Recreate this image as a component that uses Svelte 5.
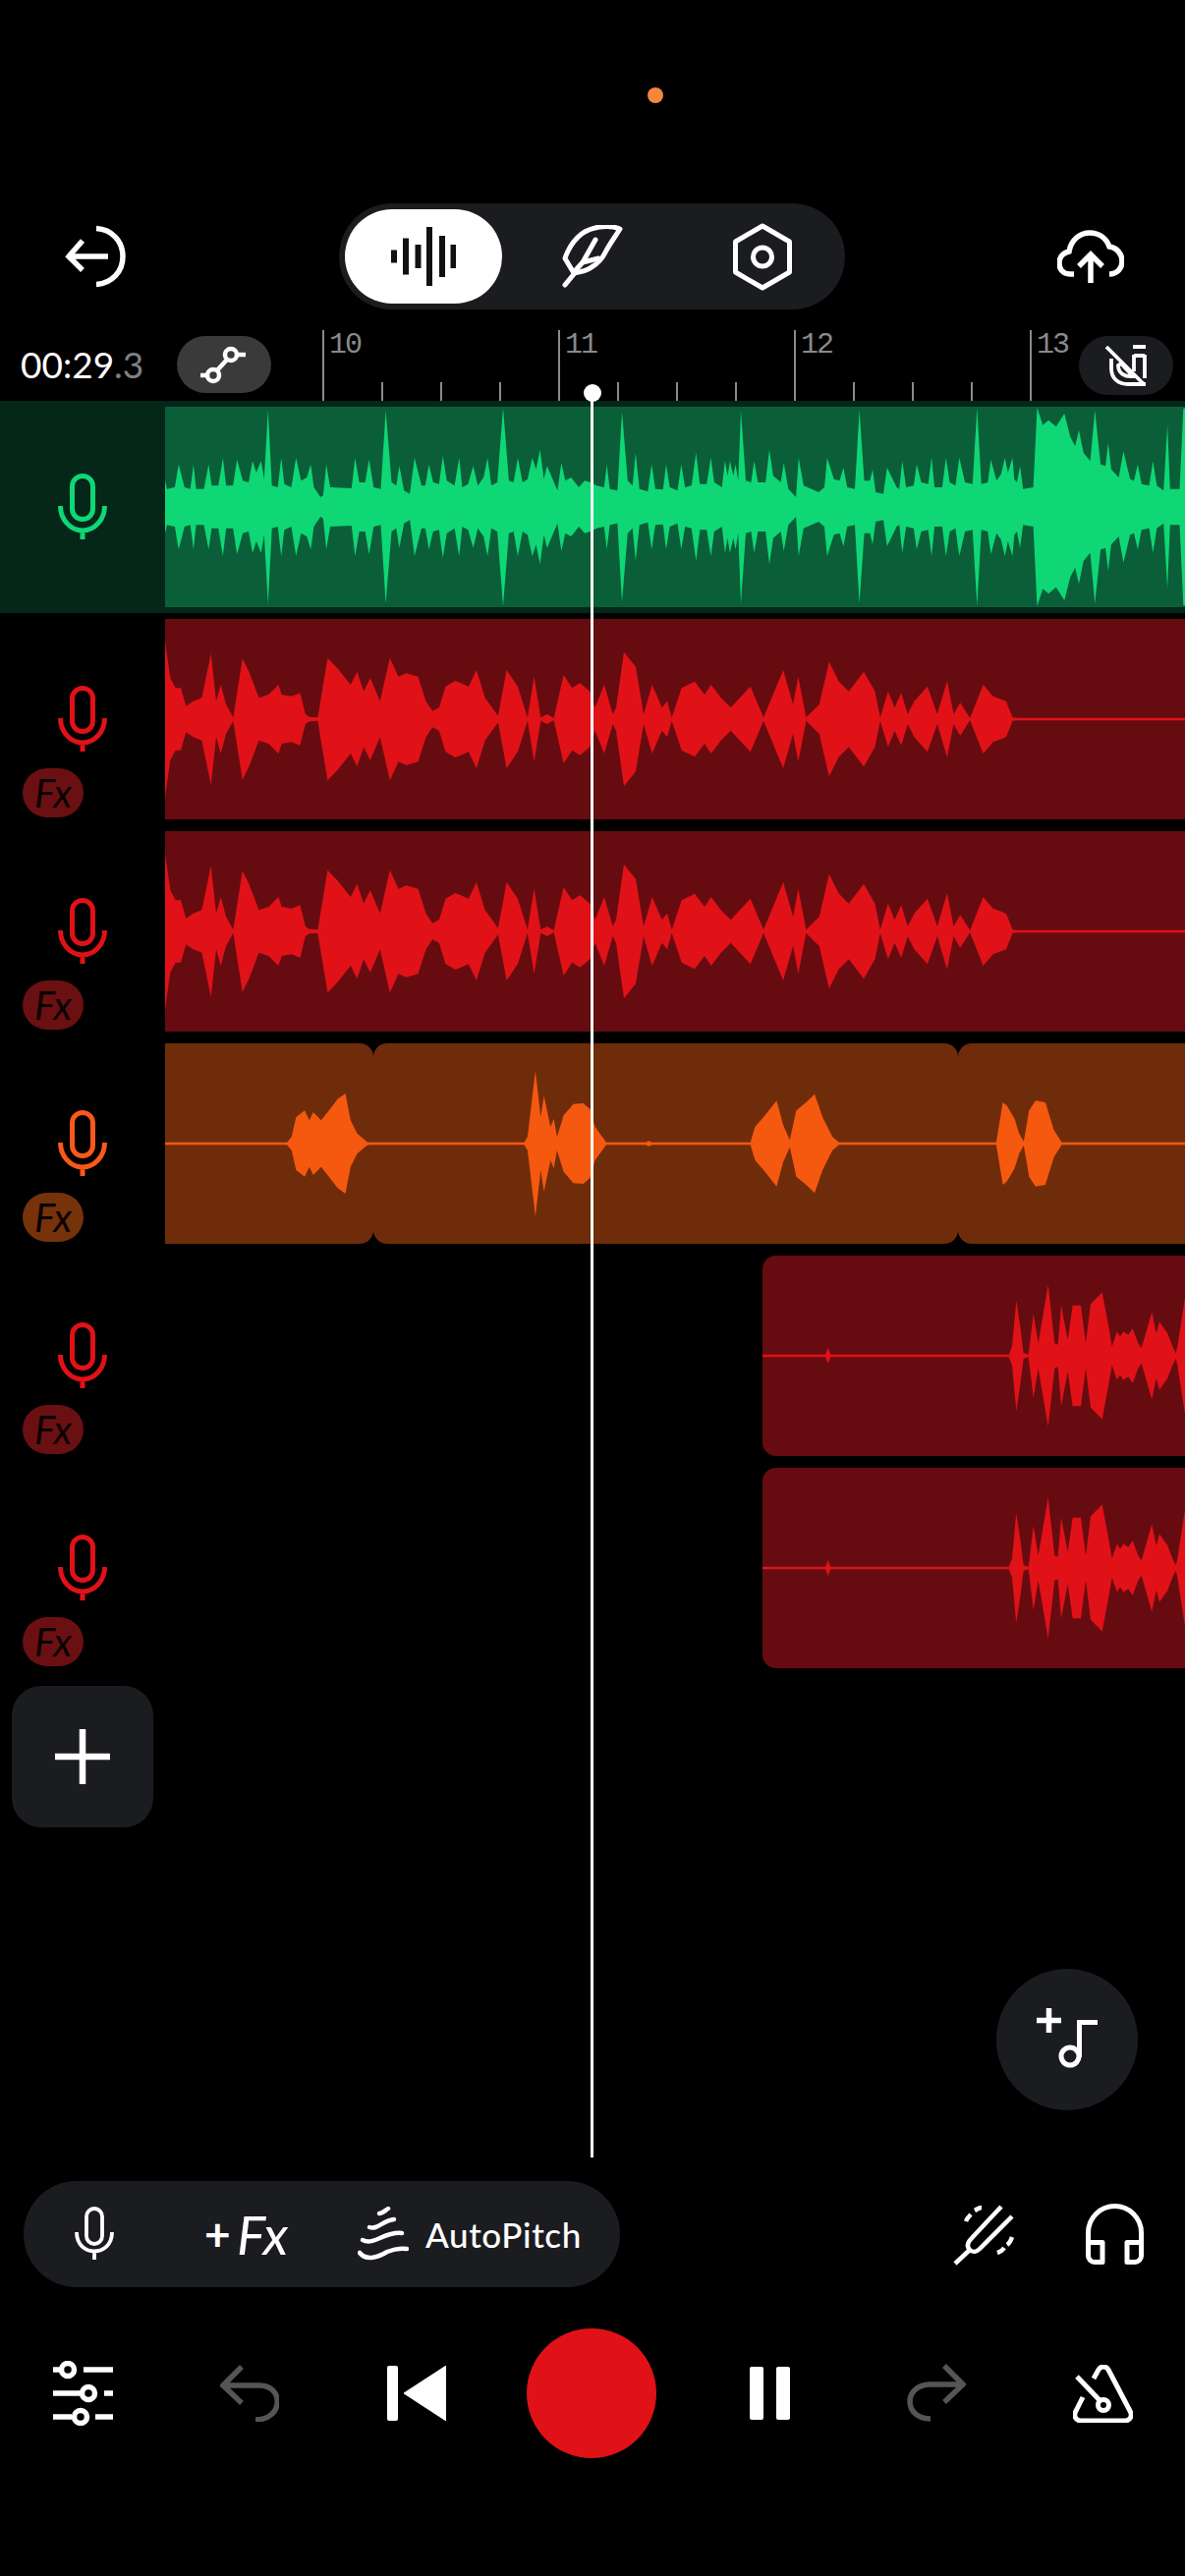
<script>
  const conv = (pts, sx, ox, cy) => pts.map(([x, y]) => [(x - ox) / sx, Math.max((cy - y) / 3, 1)]);
  const shape = (pts) => {
    const top = pts.map(([x, a]) => `${x.toFixed(1)} ${(102 - a).toFixed(1)}`);
    const bottom = [...pts].reverse().map(([x, a]) => `${x.toFixed(1)} ${(102 + a).toFixed(1)}`);
    return 'M' + top.join('L') + 'L' + bottom.join('L') + 'Z';
  };

  const greenA = [[425,265],[430,290],[450,285],[460,215],[475,285],[490,290],[498,215],[505,290],[525,290],[537,215],[545,280],[562,280],[574,195],[582,280],[600,280],[610,200],[625,265],[640,270],[650,205],[660,240],[672,205],[680,260],[690,48],[700,280],[715,285],[724,195],[732,275],[750,285],[762,195],[775,265],[790,255],[800,215],[808,285],[825,315],[832,310],[840,215],[850,285],[905,288],[914,195],[925,270],[940,270],[950,200],[962,285],[980,290],[993,50],[1008,270],[1020,280],[1028,220],[1040,295],[1055,305],[1067,195],[1085,280],[1095,280],[1104,215],[1115,270],[1130,275],[1140,190],[1150,265],[1170,280],[1182,195],[1190,285],[1205,275],[1218,220],[1230,280],[1245,255],[1255,195],[1265,280],[1280,270],[1295,42],[1310,265],[1322,270],[1333,195],[1345,270],[1358,260],[1370,195],[1380,230],[1390,170],[1400,260],[1408,220],[1435,295],[1445,210],[1455,265],[1470,255],[1490,285],[1505,265],[1520,270]];
  const greenB = [[15,280],[35,285],[42,215],[50,290],[70,295],[82,55],[97,265],[110,280],[118,180],[128,290],[150,298],[160,215],[170,290],[190,292],[198,215],[208,285],[228,295],[238,215],[248,285],[265,280],[277,180],[287,275],[305,275],[316,195],[325,270],[345,285],[353,205],[360,250],[366,205],[375,250],[381,215],[388,265],[395,50],[408,265],[422,270],[430,205],[440,270],[460,270],[470,170],[480,250],[500,270],[508,210],[520,290],[540,315],[547,195],[560,280],[600,300],[615,285],[622,195],[640,260],[655,265],[665,225],[675,285],[695,290],[707,50],[720,265],[735,265],[742,230],[750,300],[770,305],[780,225],[805,285],[812,290],[820,205],[830,285],[850,280],[858,215],[870,270],[888,275],[897,195],[905,285],[925,285],[935,195],[945,270],[960,280],[970,195],[985,270],[1005,275],[1017,42],[1028,275],[1045,270],[1053,200],[1068,265],[1080,245],[1090,195],[1098,240],[1110,195],[1115,260],[1122,270],[1130,220],[1138,290],[1165,285],[1175,42],[1190,95],[1205,80],[1225,100],[1247,60],[1262,130],[1275,160],[1285,110],[1297,180],[1315,205],[1327,50],[1342,215],[1355,220],[1362,150],[1370,230],[1390,255],[1402,175],[1420,260],[1430,265],[1440,215],[1450,275],[1470,280],[1480,205],[1490,280],[1508,295],[1518,95],[1525,290],[1550,290],[1560,45],[1568,42]];
  const greenPath = shape([
    ...conv(greenA, 2.529, 425, 345),
    ...conv(greenB, 2.587, -1121, 345)
  ]);

  const redFull = [[12,95],[20,210],[28,240],[36,240],[44,295],[55,280],[68,270],[82,135],[90,280],[97,230],[105,290],[116,330],[130,150],[140,190],[155,270],[170,260],[185,230],[190,260],[205,265],[218,255],[226,320],[232,328],[245,330],[260,148],[275,180],[295,230],[305,190],[315,250],[325,210],[340,280],[355,148],[368,205],[380,195],[398,205],[410,280],[420,310],[430,300],[440,235],[455,218],[475,235],[487,185],[500,270],[520,325],[533,185],[550,235],[565,330],[575,205],[585,330],[595,320],[605,335],[620,200],[633,240],[645,225],[660,250],[668,300],[682,230],[695,320],[700,300],[712,130],[730,175],[742,320],[755,230],[770,300],[778,280],[785,330],[800,240],[820,220],[835,260],[845,230],[860,270],[875,300],[905,235],[925,330],[955,185],[970,290],[978,205],[990,330],[1010,290],[1025,160],[1040,220],[1055,250],[1078,190],[1095,250],[1103,330],[1115,250],[1125,300],[1135,255],[1145,320],[1155,280],[1175,235],[1190,320],[1205,218],[1215,320],[1225,285],[1240,335],[1260,230],[1275,265],[1295,280],[1305,330],[1310,331],[1568,331]];
  const redPath = shape(conv(redFull, 1.499, 12, 335));

  const orange = [[12,337],[198,337],[205,320],[212,260],[225,240],[232,270],[238,245],[250,270],[262,240],[275,205],[287,188],[295,270],[305,310],[320,336],[325,337],[560,337],[565,320],[577,118],[585,260],[590,195],[600,290],[605,265],[610,320],[620,255],[635,220],[650,218],[660,235],[668,290],[685,337],[745,337],[750,333],[755,337],[905,337],[912,290],[925,260],[945,210],[955,285],[965,330],[975,240],[990,215],[1003,190],[1015,260],[1030,320],[1040,337],[1280,337],[1290,215],[1296,225],[1308,265],[1315,310],[1322,335],[1330,240],[1340,210],[1355,215],[1368,300],[1380,337],[1568,337]];
  const orangePath = shape(conv(orange, 1.499, 12, 341));

  const late = [[228,325],[420,325],[428,305],[436,325],[980,325],[990,300],[1003,160],[1015,240],[1025,320],[1040,325],[1055,200],[1070,290],[1100,112],[1120,290],[1130,295],[1140,175],[1160,280],[1175,175],[1200,175],[1215,290],[1230,170],[1265,135],[1285,240],[1295,300],[1310,255],[1320,270],[1330,255],[1345,265],[1358,245],[1375,290],[1385,305],[1417,195],[1430,260],[1440,225],[1465,260],[1480,300],[1490,320],[1495,300],[1518,150]];
  const latePath = shape(conv(late, 3, 228, 328.5));

  const tracks = [
    { kind: 'green', fx: false, clips: [{ cls: 'full' }], path: greenPath, w: 1038 },
    { kind: 'red', fx: true, clips: [{ cls: 'full' }], path: redPath, w: 1038 },
    { kind: 'red', fx: true, clips: [{ cls: 'full' }], path: redPath, w: 1038 },
    { kind: 'orange', fx: true, clips: [{ cls: 'first' }, { cls: 'mid' }, { cls: 'last' }], path: orangePath, w: 1038 },
    { kind: 'red', fx: true, clips: [{ cls: 'late' }], path: latePath, w: 430 },
    { kind: 'red', fx: true, clips: [{ cls: 'late' }], path: latePath, w: 430 }
  ];

  const ruler = [10, null, null, null, 11, null, null, null, 12, null, null, null, 13];
  const bars = [[0, 13], [12, 37], [24.5, 24], [36, 60], [49, 42], [60.5, 24]];
</script>

<div class="screen">
  <div class="status"><span class="dot"></span></div>

  <div class="toolbar">
    <svg class="ic" width="64" height="64" viewBox="0 0 64 64" fill="none" stroke="#fff" stroke-width="5.5">
      <path d="M18 16 4 32l14 14M4 32h40" stroke-linejoin="miter" />
      <path d="M32 3.5c16 1 27 13 27 28.500s-11 27.500-27 28.500" />
    </svg>
    <div class="modes">
      <div class="seg active">
        <svg width="66" height="60" viewBox="0 0 66 60" fill="#111">
          {#each bars as [x, h]}<rect x={x} y={30 - h / 2} width="6" height={h} />{/each}
        </svg>
      </div>
      <div class="seg">
        <svg width="62" height="65" viewBox="0 0 62 65" fill="none" stroke="#fff" stroke-width="5" stroke-linecap="round" stroke-linejoin="round">
          <path d="M59 4C46-1 30 2 20 9 11 16 6 25 3 34l9 15c7-1 14-3 18-6 7-4 11-9 14-15 4-8 10-16 15-24Z" />
          <path d="M3 61 12 50M34 15 21 38M21 38 37 34M13 47l8-9" />
        </svg>
      </div>
      <div class="seg">
        <svg width="60" height="69" viewBox="0 0 60 69" fill="none" stroke="#fff" stroke-width="5">
          <path d="M30 3 57.500 19v31L30 66 2.500 50V19Z" stroke-linejoin="round" />
          <circle cx="30" cy="34.500" r="9.500" />
        </svg>
      </div>
    </div>
    <svg class="ic" width="68" height="54" viewBox="0 0 68 54" fill="none" stroke="#fff" stroke-width="5.500">
      <path d="M17 45h-4C5 45 2 39 2 34c0-7 5-11 10-12C14 10 23 3 33 3c10 0 17 6 20 14 8 1 13 8 13 15 0 7-5 13-13 13" />
      <path d="M34 54V25M22 37l12-12 12 12" />
    </svg>
  </div>

  <div class="timeline">
    <div class="meta">
      <div class="time">00:29<span>.3</span></div>
      <div class="chip">
        <svg width="50" height="42" viewBox="0 0 50 42" fill="none" stroke="#fff" stroke-width="4.500">
          <circle cx="32" cy="11" r="6" />
          <circle cx="14" cy="32" r="6" />
          <path d="M28 16 18 27M38 11h9M1 32h8" />
        </svg>
      </div>
    </div>
    <div class="ruler">
      {#each ruler as label}
        {#if label}
          <div class="tick major"><span>{label}</span></div>
        {:else}
          <div class="tick"></div>
        {/if}
      {/each}
    </div>
    <div class="snap">
      <svg width="44" height="44" viewBox="0 0 44 44" fill="none" stroke="#fff" stroke-width="3.800">
        <path d="M2 3 40 41M29 3h13M30 12h11M41 11v24" />
        <path d="M30 11v17M7 15v10c0 11 8 16 17 16h18" />
        <path d="M14 22c0 8 7 12 15 11L17 20Z" fill="none" />
      </svg>
    </div>
  </div>

  <div class="tracks">
    {#each tracks as t}
      <div class="row {t.kind}">
        <div class="head">
          <svg class="mic" width="50" height="67" viewBox="0 0 50 67" fill="none" stroke="currentColor" stroke-width="5">
            <rect x="14.500" y="2.500" width="21" height="44" rx="10.500" />
            <path d="M2.500 33a22.500 25 0 0 0 45 0M25 58v9" />
          </svg>
          {#if t.fx}<div class="fx">Fx</div>{/if}
        </div>
        <div class="lane">
          {#each t.clips as c}<div class="clip {c.cls}"></div>{/each}
          <svg class="wave" class:right={t.w !== 1038} width={t.w} height="204" viewBox="0 0 {t.w} 204"><path d={t.path} /></svg>
        </div>
      </div>
    {/each}
  </div>

  <div class="add">
    <svg width="56" height="56" viewBox="0 0 56 56" stroke="#fff" stroke-width="6.500"><path d="M28 0v56M0 28h56" /></svg>
  </div>

  <div class="fab-row">
    <div class="fab">
      <svg width="64" height="62" viewBox="0 0 64 62" fill="none" stroke="#fff" stroke-width="5.500">
        <path d="M12.500 0v25M0 12.500h25" />
        <path d="M43.500 50V14.500H62" stroke-width="5" />
        <circle cx="34" cy="49" r="9" stroke-width="5" />
      </svg>
    </div>
  </div>

  <div class="tools">
    <div class="toolpill">
      <svg class="tmic" width="40" height="54" viewBox="0 0 40 54" fill="none" stroke="#fff" stroke-width="3.800">
        <rect x="12" y="2" width="16" height="36" rx="8" />
        <path d="M2 26c0 26 36 26 36 0M20 46v8" />
      </svg>
      <div class="fxadd"><b>+</b><i>Fx</i></div>
      <svg class="pitch" width="52" height="55" viewBox="0 0 52 55" fill="none" stroke="#fff" stroke-width="4.500" stroke-linecap="round">
        <path d="M22 7c3 0 6-3 9-5" />
        <path d="M12 21c8 3 14-7 25-8" />
        <path d="M5 34c12 6 22-9 40-7" />
        <path d="M2 47c7 9 20 4 28-1 7-3 13-4 20-3" />
      </svg>
      <span class="ap">AutoPitch</span>
    </div>
    <div class="toolright">
      <svg width="62" height="63" viewBox="0 0 62 63" fill="none" stroke="#fff" stroke-width="4.500">
        <path d="M2 61 17 47M49 3 19 35c-5 5-5 9-2 12s7 2 10-1l33-33" />
        <path d="M13 18c1-3 3-5 5-7M22 7c2-1 4-3 7-3M45 50c3-1 5-2 7-5M55 42c3-2 4-5 5-8" />
      </svg>
      <svg width="59" height="62" viewBox="0 0 59 62" fill="none" stroke="#fff" stroke-width="5">
        <path d="M2.500 48V29.500a27 27 0 0 1 54 0V48" />
        <path d="M2.500 39.500h14.500v20H9a6.500 6.500 0 0 1-6.500-6.500ZM56.500 39.500H42v20h8a6.500 6.500 0 0 0 6.500-6.500Z" stroke-linejoin="round" />
      </svg>
    </div>
  </div>

  <div class="transport">
    <svg width="61" height="66" viewBox="0 0 61 66" fill="none" stroke="#fff" stroke-width="5.500">
      <path d="M0 9h9M31 9h30M0 33h30M52 33h9M0 57h19M43 57h18" />
      <circle cx="15" cy="9" r="6.500" /><circle cx="36" cy="33" r="6.500" /><circle cx="28" cy="57" r="6.500" />
    </svg>
    <svg width="60" height="58" viewBox="0 0 60 58" fill="none" stroke="#555" stroke-width="5.500">
      <path d="M22 2 3 21l19 18M3 21h37c25 0 25 35-4 35" />
    </svg>
    <svg width="60" height="56" viewBox="0 0 60 56"><rect x="0" y="0" width="11" height="56" rx="2" fill="#fff" /><path d="M17 28 60 0v56Z" fill="#fff" stroke="#fff" stroke-linejoin="round" /></svg>
    <div class="rec"></div>
    <svg width="41" height="54" viewBox="0 0 41 54" fill="#fff"><rect width="14" height="54" rx="2" /><rect x="27" width="14" height="54" rx="2" /></svg>
    <svg width="60" height="60" viewBox="0 0 60 60" fill="none" stroke="#555" stroke-width="5.500">
      <path d="M38 2 57 21 38 39M57 21H24C-4 21-4 56 24 56" />
    </svg>
    <svg class="metro" width="61" height="59" viewBox="0 0 61 59" fill="none" stroke="#fff" stroke-width="5">
      <path d="M10 33 3 47c-3 5 0 10 5 10h45c5 0 8-5 5-10L36 5c-2-4-8-4-10 0l-5 9" stroke-linejoin="round" />
      <path d="M4 12 27 36" stroke-width="5" />
      <circle cx="31" cy="41" r="5.500" />
    </svg>
  </div>

  <div class="playhead"></div>
</div>

<style>
  :global(body) { margin: 0; background: #000; }
  .screen { position: relative; width: 1206px; height: 2622px; background: #000; overflow: hidden; font-family: "Lato", "Roboto", sans-serif; color: #fff; }
  svg { display: block; flex: none; }

  .status { height: 207px; box-sizing: border-box; padding: 89px 0 0 659px; }
  .dot { display: block; width: 16px; height: 16px; border-radius: 50%; background: #f5873c; }

  .toolbar { height: 108px; box-sizing: border-box; padding: 0 62px 0 66px; display: flex; align-items: center; justify-content: space-between; }
  .modes { width: 515px; height: 108px; margin-left: -2px; box-sizing: border-box; padding: 6px 3px 6px 6px; border-radius: 54px; background: #1b1c1f; display: grid; grid-template-columns: 160px 184px 162px; }
  .seg { display: flex; align-items: center; justify-content: center; }
  .seg.active { background: #fff; border-radius: 48px; }

  .timeline { position: relative; height: 93px; display: flex; }
  .meta { width: 328px; flex: none; box-sizing: border-box; padding: 18px 0 0 21px; display: flex; align-items: center; }
  .time { width: 159px; flex: none; font-size: 37px; font-weight: 400; white-space: nowrap; }
  .time span { color: #808080; }
  .chip { width: 96px; height: 58px; border-radius: 29px; background: #3a3a3a; display: flex; align-items: center; justify-content: center; }
  .ruler { display: flex; align-items: flex-end; }
  .tick { width: 60px; height: 19px; box-sizing: border-box; border-left: 2px solid #8a8a8a; flex: none; }
  .tick.major { height: 72px; font-family: "Liberation Mono", monospace; font-size: 30px; line-height: 28px; letter-spacing: -2px; color: #8a8a8a; }
  .tick.major span { display: block; padding: 1px 0 0 5px; white-space: nowrap; }
  .snap { position: absolute; left: 1098px; top: 27px; width: 96px; height: 60px; border-radius: 30px; background: #1b1c1f; display: flex; align-items: center; justify-content: center; }

  .tracks { display: flex; flex-direction: column; }
  .row { height: 216px; display: flex; }
  .row.green { background: #04271a; color: #0fd775; --clip: #0a5f38; --wavec: #0fd775; }
  .row.red { color: #e01218; --clip: #660c10; --wavec: #e01218; --fx: #6b1012; }
  .row.orange { color: #f7591a; --clip: #6f2c0a; --wavec: #f5580f; --fx: #76320a; }

  .head { width: 168px; flex: none; box-sizing: border-box; padding: 74px 0 0 59px; }
  .fx { width: 62px; height: 50px; margin: 17px 0 0 -36px; border-radius: 25px; background: var(--fx); color: #0a0202; font-size: 40px; font-style: italic; font-weight: 400; line-height: 50px; text-align: center; }

  .lane { position: relative; flex: 1; height: 204px; margin-top: 6px; display: flex; }
  .clip { background: var(--clip); height: 204px; }
  .clip.full { flex: 1; }
  .clip.first { width: 212px; border-radius: 0 14px 14px 0; }
  .clip.mid { width: 595px; border-radius: 14px; }
  .clip.last { flex: 1; border-radius: 14px 0 0 14px; }
  .clip.late { flex: none; width: 430px; margin-left: 608px; border-radius: 14px 0 0 14px; }
  .wave { position: absolute; left: 0; top: 0; }
  .wave.right { left: 608px; }
  .wave path { fill: var(--wavec); }

  .add { width: 144px; height: 144px; margin: 12px 0 0 12px; border-radius: 30px; background: #1b1c1f; display: flex; align-items: center; justify-content: center; }

  .fab-row { margin-top: 144px; padding-right: 48px; display: flex; justify-content: flex-end; }
  .fab { width: 144px; height: 144px; border-radius: 50%; background: #1b1c1f; box-sizing: border-box; padding: 40px 0 0 41px; }

  .tools { margin-top: 72px; padding: 0 42px 0 24px; display: flex; align-items: center; justify-content: space-between; }
  .toolpill { width: 607px; height: 108px; box-sizing: border-box; padding-left: 52px; border-radius: 54px; background: #1b1c1f; display: flex; align-items: center; }
  .tmic { margin-top: -2px; }
  .fxadd { margin-left: 92px; width: 156px; display: flex; align-items: center; line-height: 1; }
  .fxadd b { font-size: 46px; font-weight: 700; width: 33px; }
  .fxadd i { font-size: 55px; font-weight: 400; }
  .pitch { margin-top: -2px; }
  .ap { margin-left: 17px; font-size: 35px; font-weight: 500; letter-spacing: 0.6px; white-space: nowrap; }
  .toolright { display: flex; align-items: center; gap: 73px; }

  .transport { height: 132px; margin-top: 42px; display: grid; grid-template-columns: 169px 170px 170px 189px 171px 168px 169px; align-items: center; justify-items: center; }
  .rec { width: 132px; height: 132px; margin-right: 3px; border-radius: 50%; background: #e01218; }
  .metro { justify-self: end; margin-right: 53px; }

  .playhead { position: absolute; left: 601px; top: 400px; width: 3px; height: 1796px; background: #fff; }
  .playhead::before { content: ""; position: absolute; left: -7.500px; top: -9px; width: 18px; height: 18px; border-radius: 50%; background: #fff; }
</style>
